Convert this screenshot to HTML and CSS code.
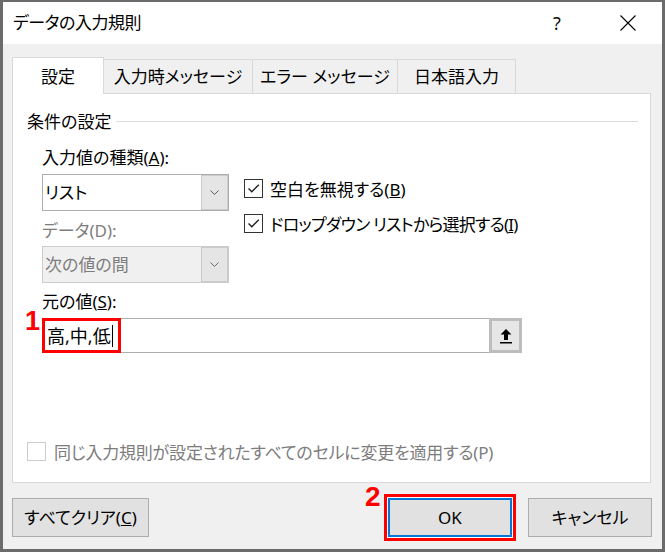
FILE: index.html
```html
<!DOCTYPE html>
<html lang="ja">
<head>
<meta charset="utf-8">
<title>データの入力規則</title>
<link rel="stylesheet" href="styles.css">
</head>
<body>
<div class="window">
  <div class="titlebar">
    <span class="title">データの入力規則</span>
    <div class="title-buttons">
      <span class="tb-btn help">?</span>
      <span class="tb-btn close">
        <svg width="16" height="16" viewBox="0 0 16 16"><path d="M0.5 0.5 L15.5 15.5 M15.5 0.5 L0.5 15.5" stroke="#000" stroke-width="1.1" fill="none"/></svg>
      </span>
    </div>
  </div>
  <div class="content">
    <div class="tabs">
      <div class="tab active tab-w1">設定</div>
      <div class="tab tab-w2">入力時メッセージ</div>
      <div class="tab tab-w3">エラー メッセージ</div>
      <div class="tab tab-w4">日本語入力</div>
    </div>
    <div class="panel">
      <div class="group-header"><span class="group-title">条件の設定</span><span class="rule"></span></div>
      <div class="form">
        <div class="cols">
          <div class="col-left">
            <div class="label">入力値の種類(<u>A</u>):</div>
            <div class="combo">
              <span class="combo-value">リスト</span>
              <span class="combo-btn"><svg width="9" height="5" viewBox="0 0 9 5"><polyline points="0.5,0.5 4.5,4.5 8.5,0.5" fill="none" stroke="#5a5a5a" stroke-width="1"/></svg></span>
            </div>
            <div class="label disabled label-data">データ(D):</div>
            <div class="combo disabled combo-data">
              <span class="combo-value">次の値の間</span>
              <span class="combo-btn"><svg width="9" height="5" viewBox="0 0 9 5"><polyline points="0.5,0.5 4.5,4.5 8.5,0.5" fill="none" stroke="#6a6a6a" stroke-width="1"/></svg></span>
            </div>
          </div>
          <div class="col-right">
            <div class="check">
              <span class="box"><svg width="17" height="17" viewBox="0 0 17 17"><path d="M3.5 8.5 L6.8 11.8 L13.8 4.8" fill="none" stroke="#222" stroke-width="1.4"/></svg></span>
              <span class="check-text">空白を無視する(<u>B</u>)</span>
            </div>
            <div class="check check-second">
              <span class="box"><svg width="17" height="17" viewBox="0 0 17 17"><path d="M3.5 8.5 L6.8 11.8 L13.8 4.8" fill="none" stroke="#222" stroke-width="1.4"/></svg></span>
              <span class="check-text tight">ドロップダウン リストから選択する(<u>I</u>)</span>
            </div>
          </div>
        </div>
        <div class="label label-source">元の値(<u>S</u>):</div>
        <div class="source">
          <span class="mark mark-1">1</span>
          <span class="source-value">高,中,低</span><span class="caret"></span>
          <span class="highlight"></span>
          <span class="picker">
            <svg width="12" height="15" viewBox="0 0 12 15"><polygon points="6,0 11.5,5.5 8,5.5 8,11 4,11 4,5.5 0.5,5.5" fill="#000"/><rect x="0" y="13" width="12" height="1.5" fill="#000"/></svg>
          </span>
        </div>
      </div>
      <div class="check disabled bottom-check">
        <span class="box"></span>
        <span class="check-text">同じ入力規則が設定されたすべてのセルに変更を適用する(P)</span>
      </div>
    </div>
    <div class="buttons">
      <button class="btn btn-clear">すべてクリア(<u>C</u>)</button>
      <span class="spacer"></span>
      <button class="btn btn-ok">OK<span class="mark mark-2">2</span></button>
      <button class="btn btn-cancel">キャンセル</button>
    </div>
  </div>
</div>
</body>
</html>
```

FILE: styles.css
```css
* {
  box-sizing: border-box;
}

html, body {
  margin: 0;
  padding: 0;
}

body {
  width: 665px;
  height: 552px;
  background: #6b6b6b;
  font-family: "Noto Sans", "Noto Sans CJK JP", sans-serif;
  font-feature-settings: "palt" 1;
  font-size: 17px;
  line-height: 24px;
  color: #000;
  overflow: hidden;
}

.window {
  margin: 2px 3px 3px 3px;
  height: 547px;
  background: #f0f0f0;
  display: flex;
  flex-direction: column;
}

.titlebar {
  height: 42px;
  background: #fff;
  display: flex;
  align-items: center;
  padding-left: 10px;
}

.title {
  flex: 1;
  letter-spacing: -0.5px;
}

.title-buttons {
  display: flex;
  align-items: center;
  height: 100%;
}

.tb-btn {
  display: flex;
  align-items: center;
  justify-content: center;
  height: 100%;
}

.help {
  width: 46px;
  margin-right: 14px;
  font-size: 18px;
  color: #111;
}

.close {
  width: 68px;
}

.content {
  flex: 1;
  display: flex;
  flex-direction: column;
  padding-top: 13px;
}

.tabs {
  display: flex;
  align-items: flex-end;
  height: 37px;
  margin-bottom: -1px;
  padding-left: 9px;
  z-index: 1;
}

.tab {
  flex: 0 0 auto;
  height: 35px;
  border: 1px solid #d9d9d9;
  background: #f0f0f0;
  text-align: center;
  padding-top: 5px;
  margin-left: -1px;
  white-space: nowrap;
}

.tab.active {
  height: 37px;
  margin-left: 0;
  background: #fff;
  border-bottom: none;
  padding-top: 7px;
  z-index: 1;
}

.tab-w1 { width: 92px; }
.tab-w2 { width: 150px; }
.tab-w3 { width: 146px; }
.tab-w4 { width: 119px; }

.panel {
  height: 390px;
  margin: 0 11px 0 9px;
  background: #fff;
  border: 1px solid #d9d9d9;
  display: flex;
  flex-direction: column;
}

.group-header {
  display: flex;
  align-items: center;
  margin-top: 16px;
  padding-left: 14px;
  padding-right: 12px;
}

.rule {
  flex: 1;
  height: 1px;
  background: #dcdcdc;
  margin-left: 5px;
  margin-top: -1px;
}

.form {
  margin-top: 12px;
  margin-left: 29px;
  width: 480px;
  display: flex;
  flex-direction: column;
}

.cols {
  display: flex;
}

.col-left {
  flex: 0 0 187px;
  width: 187px;
  display: flex;
  flex-direction: column;
}

.col-right {
  flex: 0 0 auto;
  margin-left: 15px;
  padding-top: 32px;
  display: flex;
  flex-direction: column;
}

.label {
  white-space: nowrap;
}

.label.disabled,
.disabled .check-text,
.combo.disabled .combo-value {
  color: #7d7d7d;
}

.label-data {
  margin-top: 8px;
}

.label-source {
  margin-top: 7px;
}

.combo {
  margin-top: 4px;
  height: 37px;
  border: 1px solid #adadad;
  background: #fff;
  display: flex;
  align-items: center;
}

.combo-data {
  margin-top: 3px;
  border-color: #cccccc;
  background: #f0f0f0;
}

.combo-value {
  flex: 1;
  padding-left: 2px;
}

.combo-btn {
  align-self: stretch;
  width: 27px;
  background: #e5e5e5;
  border: 1px solid #cbcbcb;
  display: flex;
  align-items: center;
  justify-content: center;
}

.check {
  display: flex;
  align-items: flex-start;
  white-space: nowrap;
}

.check-second {
  margin-top: 11px;
}

.box {
  width: 19px;
  height: 19px;
  margin-top: 1px;
  border: 1px solid #333;
  background: #fff;
  display: flex;
  align-items: center;
  justify-content: center;
  flex: 0 0 auto;
}

.check-text {
  margin-left: 7px;
}

.check-text.tight {
  letter-spacing: -0.8px;
}

.source {
  position: relative;
  margin-top: 4px;
  height: 35px;
  border: 1px solid #adadad;
  background: #fff;
  display: flex;
  align-items: center;
  padding-left: 4px;
}

.source-value {
  font-size: 18px;
}

.caret {
  display: inline-block;
  width: 1px;
  height: 22px;
  background: #000;
  margin-left: 1px;
}

.highlight {
  position: absolute;
  left: -1px;
  top: -1px;
  width: 79px;
  height: 35px;
  border: 3px solid #ff0000;
}

.picker {
  margin: -1px -1px -1px auto;
  align-self: stretch;
  width: 33px;
  border: 3px solid #bdbdbd;
  background: #e6e6e6;
  display: flex;
  align-items: center;
  justify-content: center;
  padding-top: 2px;
}

.mark {
  position: absolute;
  font-family: "Liberation Sans", Arial, sans-serif;
  font-weight: bold;
  color: #ff0000;
  line-height: 1;
  font-feature-settings: normal;
}

.mark-1 {
  font-size: 27px;
  left: -18px;
  top: -11px;
}

.mark-2 {
  font-size: 28px;
  left: -25px;
  top: -17px;
}

.bottom-check {
  margin-top: auto;
  margin-bottom: 17px;
  padding-left: 14px;
}

.bottom-check .box {
  border-color: #cccccc;
}

.bottom-check .check-text {
  margin-left: 8px;
  letter-spacing: -0.2px;
}

.buttons {
  display: flex;
  margin-top: 15px;
  padding: 0 10px 0 9px;
}

.spacer {
  flex: 1;
}

.btn {
  height: 39px;
  font: inherit;
  line-height: 24px;
  color: #000;
  background: #e1e1e1;
  border: 1px solid #adadad;
  padding: 0;
  text-align: center;
  white-space: nowrap;
}

.btn-clear {
  width: 137px;
}

.btn-ok {
  position: relative;
  width: 124px;
  border: 2px solid #0078d7;
  box-shadow: 0 0 0 1px #fff, 0 0 0 4px #ff0000;
}

.btn-cancel {
  width: 124px;
  margin-left: 16px;
}
```
